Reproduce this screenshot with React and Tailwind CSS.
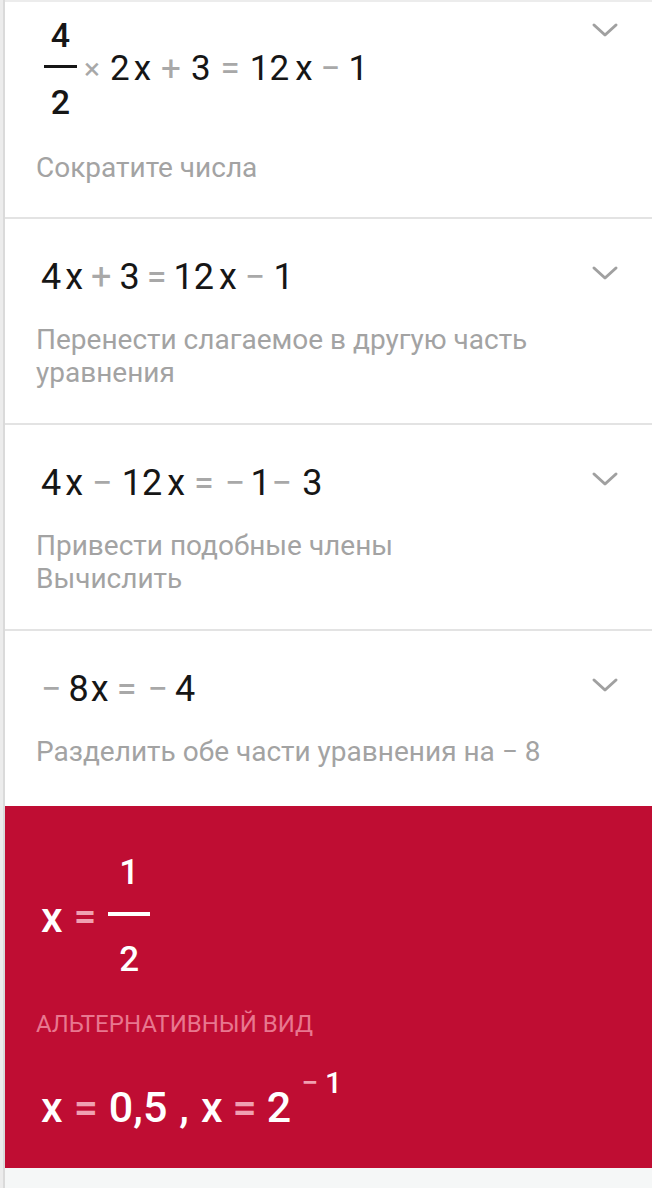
import React from 'react';

const ops = new Set(['+', '=', '−', '×']);

// token: string, or [string, extra classes] to tune spacing
function Eq({ tokens, size = 'text-[36px]' }) {
  return (
    <div className={`flex items-center ${size} leading-[40px]`}>
      {tokens.map((tk, i) => {
        const [t, c] = Array.isArray(tk) ? tk : [tk, null];
        if (ops.has(t)) {
          return (
            <span key={i} className={`text-[#a8a8a8] ${c || 'mx-[8px]'}`}>{t}</span>
          );
        }
        return (
          <span key={i} className={`text-[#161616] ${c || (t === 'x' ? 'ml-[4px]' : '')}`}>{t}</span>
        );
      })}
    </div>
  );
}

function Chevron({ className = '' }) {
  return (
    <svg width="28" height="16" viewBox="0 0 28 16" className={className}>
      <path d="M3 3 L14 13 L25 3" fill="none" stroke="#a0a0a0" strokeWidth="3" strokeLinecap="round" strokeLinejoin="round" />
    </svg>
  );
}

function Step({ tokens, desc, h, border = true }) {
  return (
    <div className={`${h} ${border ? 'border-b-2 border-[#e3e3e3]' : ''} bg-white pl-[31px] pr-[33px] pt-[38px]`}>
      <div className="flex justify-between items-start">
        <div className="pl-[5px]">
          <Eq tokens={tokens} />
        </div>
        <Chevron className="mt-[8px]" />
      </div>
      <div className="mt-[26px] text-[28px] leading-[33px] text-[#a3a3a3]">
        {desc.map((d, i) => (
          <div key={i}>{d}</div>
        ))}
      </div>
    </div>
  );
}

export default function App() {
  return (
    <div className="min-h-screen bg-[#f5f7f7] flex font-[Roboto,sans-serif]">
      <div className="w-[5px] bg-[#ececec] border-r-2 border-[#dadada]" />
      <div className="flex-1 flex flex-col">
        <div className="h-[2px] bg-[#ececec]" />
        <div className="h-[217px] border-b-2 border-[#e3e3e3] bg-white pl-[31px] pr-[33px] pt-[16px]">
          <div className="flex justify-between items-start">
            <div className="flex items-center pl-[8px]">
              <div className="flex flex-col items-center w-[33px] font-medium">
                <div className="text-[34px] leading-[34px] text-[#161616]">4</div>
                <div className="w-[33px] h-[3px] bg-[#161616] mt-[13px]" />
                <div className="text-[34px] leading-[34px] text-[#161616] mt-[17px]">2</div>
              </div>
              <span className="text-[30px] text-[#a8a8a8] ml-[7px] mr-[10px]">×</span>
              <Eq
                tokens={['2', 'x', ['+', 'mx-[10px]'], '3', ['=', 'mx-[10px]'], '12', ['x', 'ml-[6px]'], ['−', 'mx-[8px]'], '1']}
                size="text-[35px]"
              />
            </div>
            <Chevron className="mt-[4px]" />
          </div>
          <div className="mt-[32px] text-[28px] leading-[33px] text-[#a3a3a3]">Сократите числа</div>
        </div>
        <Step
          h="h-[206px]"
          tokens={['4', 'x', '+', '3', ['=', 'mx-[7px]'], '12', ['x', 'ml-[5px]'], '−', '1']}
          desc={['Перенести слагаемое в другую часть', 'уравнения']}
        />
        <Step
          h="h-[206px]"
          tokens={['4', 'x', ['−', 'mx-[9px]'], '12', ['x', 'ml-[5px]'], ['=', 'mx-[9px]'], ['−', 'ml-[2px] mr-[5px]'], '1', ['−', 'ml-[1px] mr-[10px]'], '3']}
          desc={['Привести подобные члены', 'Вычислить']}
        />
        <Step
          h="h-[175px]"
          border={false}
          tokens={[['−', 'mr-[7px]'], '8', ['x', 'ml-[2px]'], ['=', 'mx-[8px]'], ['−', 'ml-[3px] mr-[7px]'], '4']}
          desc={['Разделить обе части уравнения на − 8']}
        />
        <div className="h-[362px] bg-[#bf0d33] pl-[31px] pt-[47px] font-medium">
          <div className="flex items-center pl-[5px]">
            <span className="text-[43px] leading-[50px] text-white">x</span>
            <span className="text-[40px] leading-[50px] text-[#f0a0b1] ml-[11px] mr-[12px]">=</span>
            <div className="flex flex-col items-center w-[42px]">
              <div className="text-[35px] leading-[40px] text-white">1</div>
              <div className="w-[42px] h-[4px] bg-white mt-[19px]" />
              <div className="text-[35px] leading-[40px] text-white mt-[24px]">2</div>
            </div>
          </div>
          <div className="mt-[29px] text-[24px] leading-[30px] text-[#e8778f] font-normal">АЛЬТЕРНАТИВНЫЙ ВИД</div>
          <div className="mt-[43px] flex items-start text-white pl-[5px]">
            <div className="text-[43px] leading-[50px] flex items-center">
              <span>x</span>
              <span className="text-[#f0a0b1] mx-[11px]">=</span>
              <span>0,5</span>
              <span className="mx-[12px]">,</span>
              <span>x</span>
              <span className="text-[#f0a0b1] mx-[10px]">=</span>
              <span>2</span>
            </div>
            <div className="text-[30px] leading-[30px] -mt-[14px] ml-[10px] flex">
              <span className="text-[#f0a0b1] mr-[7px]">−</span>
              <span>1</span>
            </div>
          </div>
        </div>
      </div>
    </div>
  );
}
